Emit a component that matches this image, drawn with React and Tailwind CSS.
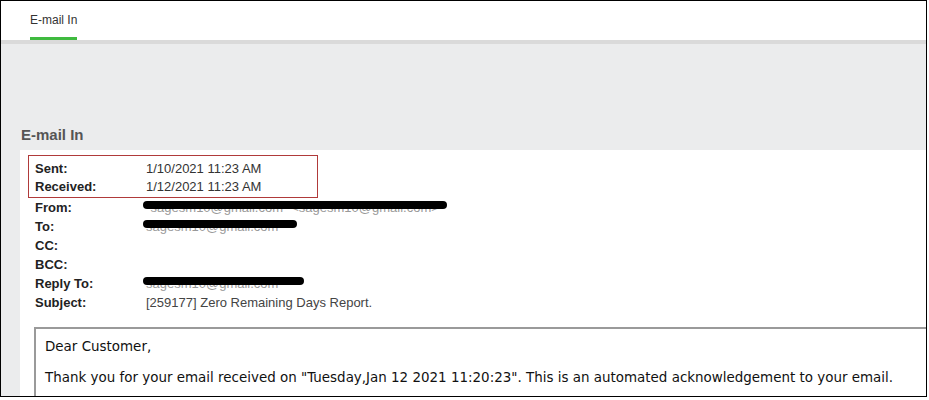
export default function App() {
  const rows = [
    { label: "From:", value: "\"sagesm10@gmail.com\" <sagesm10@gmail.com>", bar: 300 },
    { label: "To:", value: "sagesm10@gmail.com", bar: 150 },
    { label: "CC:", value: "" },
    { label: "BCC:", value: "" },
    { label: "Reply To:", value: "sagesm10@gmail.com", bar: 157 },
    { label: "Subject:", value: "[259177] Zero Remaining Days Report." },
  ];

  return (
    <div className="w-[929px] h-[400px] bg-white font-['Liberation_Sans',Arial,sans-serif]">
      <div className="w-[927px] h-[397px] border border-black overflow-hidden flex flex-col">
        <div className="h-[39px] bg-white flex items-end pl-[29px] shrink-0">
          <div className="flex flex-col items-center">
            <span className="text-[12px] text-[#333] leading-[14px] mb-[10px]">E-mail In</span>
            <div className="h-[3px] w-[47px] bg-[#3fba3f]"></div>
          </div>
        </div>
        <div className="h-[4px] bg-[#dadada] shrink-0"></div>
        <div className="flex-1 bg-[#ebeced] flex flex-col">
          <div className="h-[106px] flex items-end pl-[20px] pb-[7px] shrink-0">
            <h2 className="text-[15px] font-bold text-[#555] leading-[16px]">E-mail In</h2>
          </div>
          <div className="flex-1 ml-[19px] bg-white pt-[5px]">
            <div className="ml-[8px] w-[290px] border border-[#b03a3a] pt-[4px] pb-[1px] pl-[6px]">
              <div className="flex h-[18px] items-center text-[13px]">
                <span className="w-[111px] font-bold text-[#222]">Sent:</span>
                <span className="text-[#333]">1/10/2021 11:23 AM</span>
              </div>
              <div className="flex h-[18px] items-center text-[13px]">
                <span className="w-[111px] font-bold text-[#222]">Received:</span>
                <span className="text-[#333]">1/12/2021 11:23 AM</span>
              </div>
            </div>
            <div className="pl-[15px]">
              {rows.map((r) => (
                <div key={r.label} className="flex h-[19px] items-center text-[13px]">
                  <span className="w-[111px] font-bold text-[#222] shrink-0">{r.label}</span>
                  <span className="relative text-[#444] whitespace-nowrap">
                    <span className={r.bar ? "text-[#999]" : ""}>{r.value}</span>
                    {r.bar && (
                      <svg
                        className="absolute left-[-3px] top-[2px]"
                        width={r.bar + 4}
                        height="10"
                        viewBox={`0 0 ${r.bar + 4} 10`}
                      >
                        <path
                          d={`M4 5 L${r.bar} 5`}
                          stroke="#000"
                          strokeWidth="8"
                          strokeLinecap="round"
                        />
                      </svg>
                    )}
                  </span>
                </div>
              ))}
            </div>
            <div className="ml-[14px] mt-[15px] w-[1000px] h-[120px] border-2 border-[#9a9a9a] pl-[9px] pt-[10px] font-['DejaVu_Sans',Verdana,sans-serif] text-[13.45px] text-[#111]">
              <p className="leading-[16px]">Dear Customer,</p>
              <p className="leading-[16px] mt-[15px] whitespace-nowrap">
                Thank you for your email received on "Tuesday,Jan 12 2021 11:20:23". This is an automated acknowledgement to your email.
              </p>
            </div>
          </div>
        </div>
      </div>
    </div>
  );
}
